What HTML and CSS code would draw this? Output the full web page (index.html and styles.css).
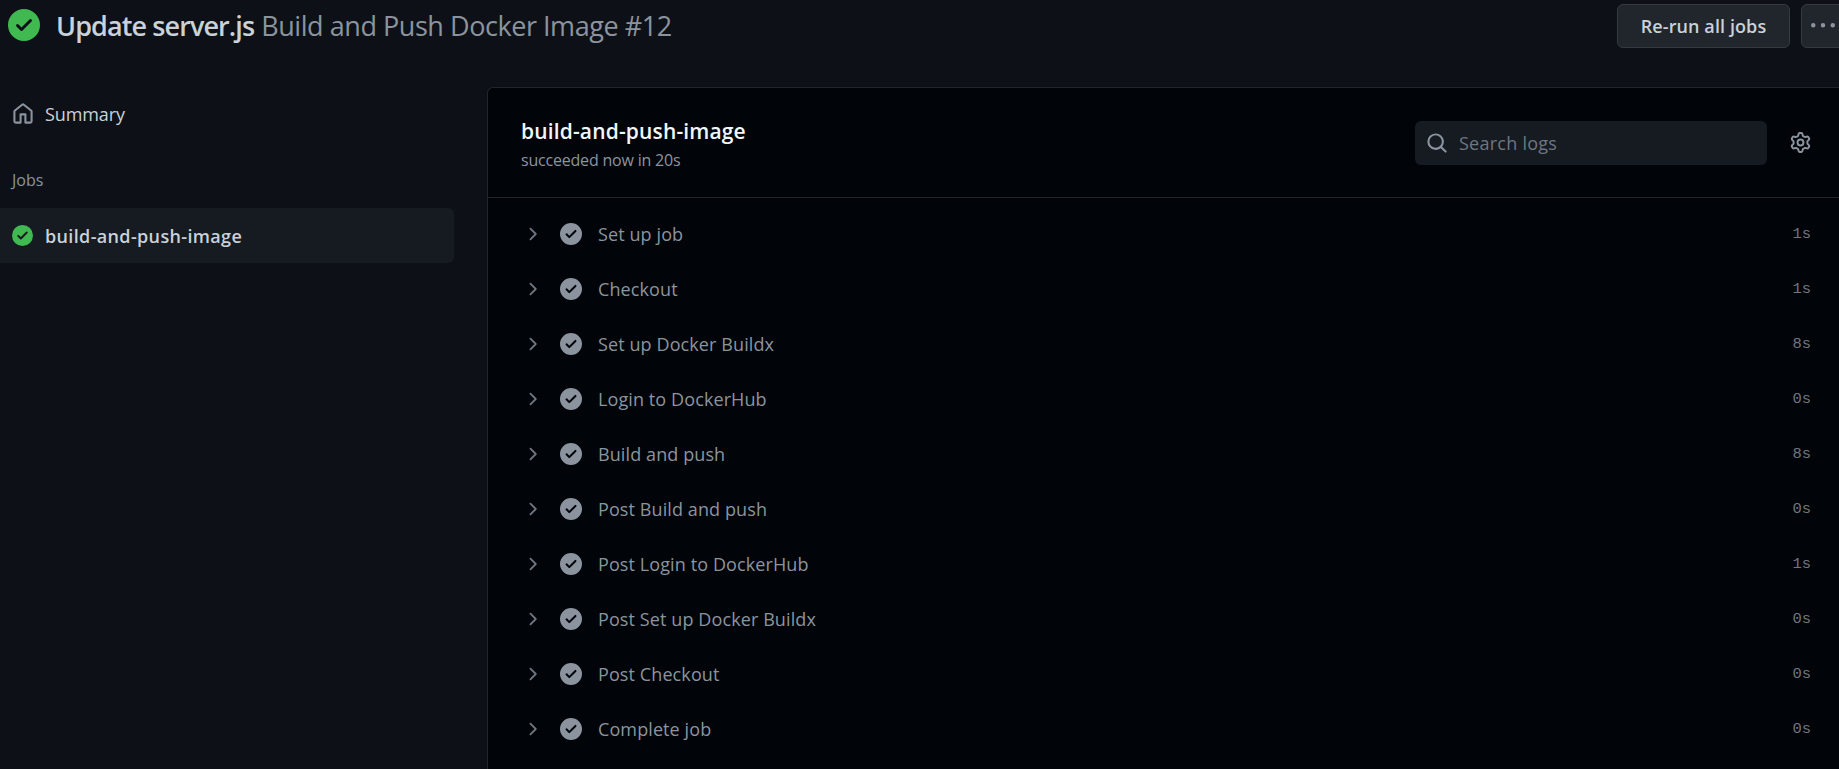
FILE: index.html
```html
<!DOCTYPE html>
<html lang="en">
<head>
    <meta charset="UTF-8">
    <meta name="viewport" content="width=device-width, initial-scale=1.0">
    <title>Update server.js</title>
    <link rel="stylesheet" href="styles.css">
</head>
<body>
    <svg class="sprite" aria-hidden="true">
        <symbol id="i-check" viewBox="0 0 16 16"><path d="M8 16A8 8 0 1 1 8 0a8 8 0 0 1 0 16Zm3.78-9.72a.751.751 0 0 0-.018-1.042.751.751 0 0 0-1.042-.018L6.75 9.19 5.28 7.72a.751.751 0 0 0-1.042.018.751.751 0 0 0-.018 1.042l2 2a.75.75 0 0 0 1.06 0Z"/></symbol>
        <symbol id="i-chevron" viewBox="0 0 16 16"><path d="M6.22 3.22a.75.75 0 0 1 1.06 0l4.25 4.25a.75.75 0 0 1 0 1.06l-4.25 4.25a.751.751 0 0 1-1.042-.018.751.751 0 0 1-.018-1.042L9.94 8 6.22 4.28a.75.75 0 0 1 0-1.06Z"/></symbol>
    </svg>

    <header class="top-bar">
        <svg class="icon-title"><use href="#i-check"/></svg>
        <h1 class="run-title"><b>Update server.js</b> <span>Build and Push Docker Image #12</span></h1>
        <button class="btn btn-rerun">Re-run all jobs</button>
        <button class="btn btn-more">
            <svg viewBox="0 0 16 16"><path d="M8 9a1.5 1.5 0 1 0 0-3 1.5 1.5 0 0 0 0 3ZM1.5 9a1.5 1.5 0 1 0 0-3 1.5 1.5 0 0 0 0 3Zm13 0a1.5 1.5 0 1 0 0-3 1.5 1.5 0 0 0 0 3Z"/></svg>
        </button>
    </header>

    <div class="layout">
        <aside class="sidebar">
            <a class="summary-link">
                <svg viewBox="0 0 16 16"><path d="M6.906.664a1.749 1.749 0 0 1 2.187 0l5.25 4.2c.415.332.657.835.657 1.367v7.019A1.75 1.75 0 0 1 13.25 15h-3.5a.75.75 0 0 1-.75-.75V9H7v5.25a.75.75 0 0 1-.75.75h-3.5A1.75 1.75 0 0 1 1 13.25V6.23c0-.531.242-1.034.657-1.366l5.25-4.2Zm1.25 1.171a.25.25 0 0 0-.312 0l-5.25 4.2a.25.25 0 0 0-.094.196v7.019c0 .138.112.25.25.25H5.5V8.25a.75.75 0 0 1 .75-.75h3.5a.75.75 0 0 1 .75.75v5.25h2.75a.25.25 0 0 0 .25-.25V6.23a.25.25 0 0 0-.094-.195Z"/></svg>
                Summary
            </a>
            <div class="jobs-label">Jobs</div>
            <a class="job-link">
                <svg><use href="#i-check"/></svg>
                build-and-push-image
            </a>
        </aside>

        <main class="panel">
            <div class="panel-head">
                <div class="panel-title">
                    <h2>build-and-push-image</h2>
                    <p>succeeded now in 20s</p>
                </div>
                <div class="search-box">
                    <svg viewBox="0 0 16 16"><path d="M10.68 11.74a6 6 0 0 1-7.922-8.982 6 6 0 0 1 8.982 7.922l3.04 3.04a.749.749 0 0 1-.326 1.275.749.749 0 0 1-.734-.215ZM11.5 7a4.499 4.499 0 1 0-8.997 0A4.499 4.499 0 0 0 11.5 7Z"/></svg>
                    <span>Search logs</span>
                </div>
                <svg class="gear" viewBox="0 0 16 16"><path d="M8 0a8.2 8.2 0 0 1 .701.031C9.444.095 9.99.645 10.16 1.29l.288 1.107c.018.066.079.158.212.224.231.114.454.243.668.386.123.082.233.09.299.071l1.103-.303c.644-.176 1.392.021 1.82.63.27.385.506.792.704 1.218.315.675.111 1.422-.364 1.891l-.814.806c-.049.048-.098.147-.088.294.016.257.016.515 0 .772-.01.147.038.246.088.294l.814.806c.475.469.679 1.216.364 1.891a7.977 7.977 0 0 1-.704 1.217c-.428.61-1.176.807-1.82.63l-1.102-.302c-.067-.019-.177-.011-.3.071a5.909 5.909 0 0 1-.668.386c-.133.066-.194.158-.211.224l-.29 1.106c-.168.646-.715 1.196-1.458 1.26a8.006 8.006 0 0 1-1.402 0c-.743-.064-1.289-.614-1.458-1.26l-.289-1.106c-.018-.066-.079-.158-.212-.224a5.738 5.738 0 0 1-.668-.386c-.123-.082-.233-.09-.299-.071l-1.103.303c-.644.176-1.392-.021-1.82-.63a8.12 8.12 0 0 1-.704-1.218c-.315-.675-.111-1.422.363-1.891l.815-.806c.05-.048.098-.147.088-.294a6.214 6.214 0 0 1 0-.772c.01-.147-.038-.246-.088-.294l-.815-.806C.635 6.045.431 5.298.746 4.623a7.92 7.92 0 0 1 .704-1.217c.428-.61 1.176-.807 1.82-.63l1.102.302c.067.019.177.011.3-.071.214-.143.437-.272.668-.386.133-.066.194-.158.211-.224l.29-1.106C6.009.645 6.556.095 7.299.03 7.53.01 7.764 0 8 0Zm-.571 1.525c-.036.003-.108.036-.137.146l-.289 1.105c-.147.561-.549.967-.998 1.189-.173.086-.34.183-.5.29-.417.278-.97.423-1.529.27l-1.103-.303c-.109-.03-.175.016-.195.045-.22.312-.412.644-.573.99-.014.031-.021.11.059.19l.815.806c.411.406.562.957.53 1.456a4.709 4.709 0 0 0 0 .582c.032.499-.119 1.05-.53 1.456l-.815.806c-.081.08-.073.159-.059.19.162.346.353.677.573.989.02.03.085.076.195.046l1.102-.303c.56-.153 1.113-.008 1.53.27.161.107.328.204.501.29.447.222.85.629.997 1.189l.289 1.105c.029.109.101.143.137.146a6.6 6.6 0 0 0 1.142 0c.036-.003.108-.036.137-.146l.289-1.105c.147-.561.549-.967.998-1.189.173-.086.34-.183.5-.29.417-.278.97-.423 1.529-.27l1.103.303c.109.029.175-.016.195-.045.22-.313.411-.644.573-.99.014-.031.021-.11-.059-.19l-.815-.806c-.411-.406-.562-.957-.53-1.456a4.709 4.709 0 0 0 0-.582c-.032-.499.119-1.05.53-1.456l.815-.806c.081-.08.073-.159.059-.19a6.464 6.464 0 0 0-.573-.989c-.02-.03-.085-.076-.195-.046l-1.102.303c-.56.153-1.113.008-1.53-.27a4.44 4.44 0 0 0-.501-.29c-.447-.222-.85-.629-.997-1.189l-.289-1.105c-.029-.11-.101-.143-.137-.146a6.6 6.6 0 0 0-1.142 0ZM11 8a3 3 0 1 1-6 0 3 3 0 0 1 6 0ZM9.5 8a1.5 1.5 0 1 0-3.001.001A1.5 1.5 0 0 0 9.5 8Z"/></svg>
            </div>

            <div class="steps">
                <div class="step"><svg class="chev"><use href="#i-chevron"/></svg><svg class="done"><use href="#i-check"/></svg><span class="step-name">Set up job</span><span class="step-time">1s</span></div>
                <div class="step"><svg class="chev"><use href="#i-chevron"/></svg><svg class="done"><use href="#i-check"/></svg><span class="step-name">Checkout</span><span class="step-time">1s</span></div>
                <div class="step"><svg class="chev"><use href="#i-chevron"/></svg><svg class="done"><use href="#i-check"/></svg><span class="step-name">Set up Docker Buildx</span><span class="step-time">8s</span></div>
                <div class="step"><svg class="chev"><use href="#i-chevron"/></svg><svg class="done"><use href="#i-check"/></svg><span class="step-name">Login to DockerHub</span><span class="step-time">0s</span></div>
                <div class="step"><svg class="chev"><use href="#i-chevron"/></svg><svg class="done"><use href="#i-check"/></svg><span class="step-name">Build and push</span><span class="step-time">8s</span></div>
                <div class="step"><svg class="chev"><use href="#i-chevron"/></svg><svg class="done"><use href="#i-check"/></svg><span class="step-name">Post Build and push</span><span class="step-time">0s</span></div>
                <div class="step"><svg class="chev"><use href="#i-chevron"/></svg><svg class="done"><use href="#i-check"/></svg><span class="step-name">Post Login to DockerHub</span><span class="step-time">1s</span></div>
                <div class="step"><svg class="chev"><use href="#i-chevron"/></svg><svg class="done"><use href="#i-check"/></svg><span class="step-name">Post Set up Docker Buildx</span><span class="step-time">0s</span></div>
                <div class="step"><svg class="chev"><use href="#i-chevron"/></svg><svg class="done"><use href="#i-check"/></svg><span class="step-name">Post Checkout</span><span class="step-time">0s</span></div>
                <div class="step"><svg class="chev"><use href="#i-chevron"/></svg><svg class="done"><use href="#i-check"/></svg><span class="step-name">Complete job</span><span class="step-time">0s</span></div>
            </div>
        </main>
    </div>
</body>
</html>
```

FILE: styles.css
```css
html, body {
    height: 100%;
    overflow: hidden;
}
body {
    margin: 0;
    width: 1839px;
    background-color: #0d1117;
    color: #c9d1d9;
    font-family: "Open Sans", "Noto Sans", sans-serif;
    font-size: 18px;
}
.sprite {
    display: none;
}
svg {
    flex: none;
    fill: currentColor;
}

/* Верхняя строка */
.top-bar {
    display: flex;
    align-items: center;
    height: 52px;
    padding-left: 8px;
}
.icon-title {
    width: 32px;
    height: 32px;
    margin-top: -2px;
    color: #3fb950;
}
.run-title {
    flex: 1;
    margin: -2px 0 0 16px;
    font-size: 27px;
    font-weight: 400;
    white-space: nowrap;
}
.run-title b {
    font-weight: 600;
    letter-spacing: -0.9px;
}
.run-title span {
    color: #8b949e;
    letter-spacing: -0.45px;
}
.btn {
    display: flex;
    align-items: center;
    justify-content: center;
    height: 44px;
    background-color: #21262d;
    border: 1px solid #363b42;
    border-radius: 6px;
    color: #c9d1d9;
    font-family: inherit;
    font-size: 18px;
    font-weight: 600;
    padding: 0;
}
.btn-rerun {
    width: 173px;
    letter-spacing: 0.1px;
}
.btn-more {
    flex: none;
    width: 44px;
    margin: 0 -6px 0 11px;
    color: #8b949e;
}
.btn-more svg {
    width: 24px;
    height: 24px;
}

.layout {
    display: flex;
    align-items: flex-start;
    height: 717px;
    padding-top: 35px;
    box-sizing: border-box;
}

/* Боковая колонка */
.sidebar {
    flex: none;
    width: 454px;
    margin-right: 33px;
    padding-top: 15px;
}
.summary-link {
    display: flex;
    align-items: center;
    gap: 11px;
    height: 24px;
    padding-left: 12px;
    color: #c9d1d9;
    letter-spacing: -0.1px;
}
.summary-link svg {
    width: 22px;
    height: 22px;
    color: #8b949e;
}
.jobs-label {
    margin: 43px 0 0 12px;
    height: 22px;
    line-height: 22px;
    font-size: 16px;
    color: #8b949e;
}
.job-link {
    display: flex;
    align-items: center;
    gap: 12px;
    height: 55px;
    margin-top: 17px;
    padding-left: 12px;
    background-color: #161b22;
    border-radius: 0 6px 6px 0;
    font-weight: 600;
    letter-spacing: 0.35px;
}
.job-link svg {
    width: 21px;
    height: 21px;
    color: #3fb950;
}

/* Панель с шагами */
.panel {
    flex: 1;
    height: 100%;
    background-color: #010409;
    border: 1px solid #21262d;
    border-right: none;
    border-bottom: none;
    border-radius: 6px 0 0 0;
    box-sizing: border-box;
}
.panel-head {
    display: flex;
    align-items: center;
    height: 109px;
    padding: 0 28px 0 33px;
    border-bottom: 1px solid #21262d;
}
.panel-title {
    flex: 1;
    padding-top: 3px;
}
.panel-title h2 {
    margin: 0;
    font-size: 21px;
    font-weight: 600;
    color: #f0f6fc;
    letter-spacing: 0.15px;
    line-height: 28px;
}
.panel-title p {
    margin: 3px 0 0;
    font-size: 16px;
    letter-spacing: -0.2px;
    color: #8b949e;
    line-height: 24px;
}
.search-box {
    display: flex;
    align-items: center;
    gap: 11px;
    width: 352px;
    height: 44px;
    margin-right: 23px;
    padding-left: 11px;
    box-sizing: border-box;
    background-color: #161b22;
    border-radius: 6px;
    color: #8b949e;
}
.search-box svg {
    width: 22px;
    height: 22px;
}
.search-box span {
    color: #6e7681;
    letter-spacing: 0.25px;
}
.gear {
    width: 21px;
    height: 21px;
    color: #8b949e;
}
.steps {
    padding-top: 8px;
}
.step {
    display: flex;
    align-items: center;
    height: 55px;
    padding: 0 28px 0 34px;
    color: #8b949e;
}
.chev {
    width: 20px;
    height: 20px;
    color: #6e7681;
}
.done {
    width: 22px;
    height: 22px;
    margin-left: 18px;
    color: #8b949e;
}
.step-name {
    flex: 1;
    margin-left: 16px;
    font-size: 18px;
    letter-spacing: 0.1px;
}
.step-time {
    font-family: "Liberation Mono", monospace;
    font-size: 15.5px;
    color: #6e7681;
}
```
